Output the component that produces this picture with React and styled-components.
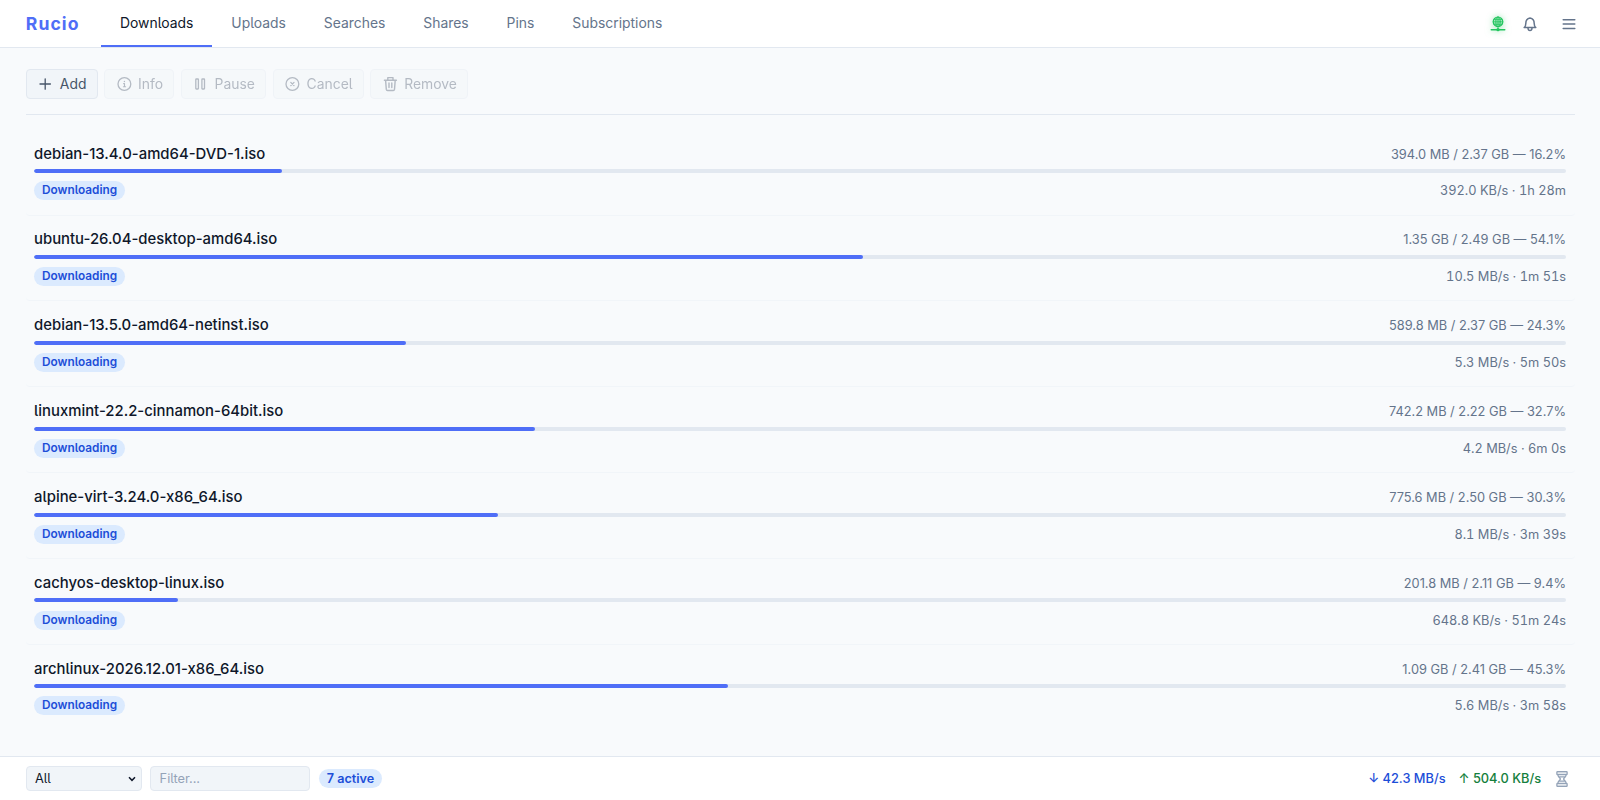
import React from "react";
import styled, { createGlobalStyle } from "styled-components";

const COLORS = {
  ACCENT: "#4f6ef7",
  TEXT: "#0f172a",
  MUTED: "#64748b",
  BORDER: "#e2e8f0",
  SURFACE: "#f1f5f9",
  BG: "#f8fafc",
  BADGE: "#dbeafe",
  BLUE: "#1d4ed8",
  GREEN: "#15803d",
};

const TABS = [
  "Downloads",
  "Uploads",
  "Searches",
  "Shares",
  "Pins",
  "Subscriptions",
];

const DOWNLOADS = [
  {
    name: "debian-13.4.0-amd64-DVD-1.iso",
    size: "394.0 MB / 2.37 GB",
    percent: 16.2,
    speed: "392.0 KB/s · 1h 28m",
  },
  {
    name: "ubuntu-26.04-desktop-amd64.iso",
    size: "1.35 GB / 2.49 GB",
    percent: 54.1,
    speed: "10.5 MB/s · 1m 51s",
  },
  {
    name: "debian-13.5.0-amd64-netinst.iso",
    size: "589.8 MB / 2.37 GB",
    percent: 24.3,
    speed: "5.3 MB/s · 5m 50s",
  },
  {
    name: "linuxmint-22.2-cinnamon-64bit.iso",
    size: "742.2 MB / 2.22 GB",
    percent: 32.7,
    speed: "4.2 MB/s · 6m 0s",
  },
  {
    name: "alpine-virt-3.24.0-x86_64.iso",
    size: "775.6 MB / 2.50 GB",
    percent: 30.3,
    speed: "8.1 MB/s · 3m 39s",
  },
  {
    name: "cachyos-desktop-linux.iso",
    size: "201.8 MB / 2.11 GB",
    percent: 9.4,
    speed: "648.8 KB/s · 51m 24s",
  },
  {
    name: "archlinux-2026.12.01-x86_64.iso",
    size: "1.09 GB / 2.41 GB",
    percent: 45.3,
    speed: "5.6 MB/s · 3m 58s",
  },
];

function Icon({ children, weight = 1.3 }) {
  return (
    <IconSvg $weight={weight} viewBox="0 0 16 16">
      {children}
    </IconSvg>
  );
}

const PlusIcon = () => (
  <Icon>
    <path d="M8.2 2.8v10.4M3 8h10.4" />
  </Icon>
);

const InfoIcon = () => (
  <Icon>
    <circle cx="8.4" cy="8" r="6.4" />
    <path d="M7.6 7.6h.9v3M7.4 10.8h2.2" strokeWidth="1.1" />
    <circle cx="8.4" cy="5.5" r="0.7" fill="currentColor" stroke="none" />
  </Icon>
);

const PauseIcon = () => (
  <Icon>
    <rect x="3.8" y="3" width="2.6" height="10" rx="0.5" />
    <rect x="9.9" y="3" width="2.6" height="10" rx="0.5" />
  </Icon>
);

const CancelIcon = () => (
  <Icon>
    <circle cx="8.4" cy="8" r="6.4" />
    <path d="M6.8 6.4l3.2 3.2M10 6.4L6.8 9.6" />
  </Icon>
);

const TrashIcon = () => (
  <Icon weight={1.4}>
    <path d="M2.4 4.2h12M5.8 4V1.6h5.2V4M3.6 4.4l.7 9c.1.7.5 1.1 1.2 1.1h5.8c.7 0 1.1-.4 1.2-1.1l.7-9M7 7v4.6M9.8 7v4.6" />
  </Icon>
);

const NetworkIcon = () => (
  <Icon weight={1.2}>
    <circle cx="8" cy="5.8" r="4.8" fill="currentColor" fillOpacity="0.25" />
    <ellipse cx="8" cy="5.8" rx="2.2" ry="4.8" strokeWidth="0.9" />
    <path d="M3.2 5.8h9.6M8 1v12M4 3.4h8M4 8.3h8" strokeWidth="0.8" />
    <path d="M1.2 13.7h13.6" strokeWidth="1.4" />
    <circle cx="8" cy="13.7" r="1.6" fill="currentColor" stroke="none" />
  </Icon>
);

const BellIcon = () => (
  <Icon weight={1.5}>
    <path d="M2.2 11.6h11.6c-1.1-1-1.6-2.2-1.6-4.2 0-3-1.5-5-4.2-5.4-2.7.4-4.2 2.4-4.2 5.4 0 2-.5 3.2-1.6 4.2zM6 12.2c.2 3 3.8 3 4 0" />
  </Icon>
);

const MenuIcon = () => (
  <Icon weight={1.5}>
    <path d="M2.2 3.7h11.6M2.2 8h11.6M2.2 12.4h11.6" />
  </Icon>
);

const HourglassIcon = () => (
  <Icon>
    <g fill="currentColor" fillOpacity="0.25">
      <rect x="2.9" y=".7" width="10.2" height="3" rx=".6" />
      <rect x="2.9" y="12.3" width="10.2" height="3" rx=".6" />
    </g>
    <path d="M3.9 3.8c0 2.4 2.5 3.1 2.5 4.2s-2.5 1.8-2.5 4.2M12.1 3.8c0 2.4-2.5 3.1-2.5 4.2s2.5 1.8 2.5 4.2M4.8 5.9h6.4M4.8 10.1h6.4" />
  </Icon>
);

const ACTIONS = [
  { label: "Add", icon: PlusIcon, enabled: true },
  { label: "Info", icon: InfoIcon },
  { label: "Pause", icon: PauseIcon },
  { label: "Cancel", icon: CancelIcon },
  { label: "Remove", icon: TrashIcon },
];

function Download({ item }) {
  return (
    <Row>
      <RowLine $align="baseline">
        <FileName>{item.name}</FileName>
        <Meta>
          {item.size} — {item.percent}%
        </Meta>
      </RowLine>
      <Track>
        <Fill style={{ width: `${item.percent}%` }} />
      </Track>
      <RowLine>
        <Badge>Downloading</Badge>
        <Meta $tabular>{item.speed}</Meta>
      </RowLine>
    </Row>
  );
}

function App() {
  return (
    <Page>
      <GlobalStyle />
      <Header>
        <Brand>Rucio</Brand>
        <Nav>
          {TABS.map((tab, index) => (
            <Tab key={tab} $active={index === 0}>
              {tab}
            </Tab>
          ))}
        </Nav>
        <HeaderIcons>
          <StatusIcon>
            <NetworkIcon />
          </StatusIcon>
          <BellIcon />
          <MenuButton>
            <MenuIcon />
          </MenuButton>
        </HeaderIcons>
      </Header>
      <Main>
        <Toolbar>
          {ACTIONS.map(({ label, icon: ActionIcon, enabled }) => (
            <ActionButton key={label} disabled={!enabled}>
              <ActionIcon />
              {label}
            </ActionButton>
          ))}
        </Toolbar>
        <List>
          {DOWNLOADS.map((item) => (
            <Download key={item.name} item={item} />
          ))}
        </List>
      </Main>
      <Footer>
        <SelectWrap>
          <Select defaultValue="All">
            <option>All</option>
          </Select>
          <Chevron viewBox="0 0 8 6">
            <path d="M1 1.2l3 3.1 3-3.1" />
          </Chevron>
        </SelectWrap>
        <FilterInput placeholder="Filter..." />
        <ActiveBadge>7 active</ActiveBadge>
        <Speeds>
          <Speed $color={COLORS.BLUE}>↓ 42.3 MB/s</Speed>
          <Speed $color={COLORS.GREEN}>↑ 504.0 KB/s</Speed>
          <LimitIcon>
            <HourglassIcon />
          </LimitIcon>
        </Speeds>
      </Footer>
    </Page>
  );
}

const GlobalStyle = createGlobalStyle`
  * {
    box-sizing: border-box;
  }
  body {
    margin: 0;
    background: ${COLORS.BG};
    color: ${COLORS.TEXT};
    font-family: Inter, "Liberation Sans", sans-serif;
    font-size: 16px;
    font-feature-settings: "cv05";
  }
  button, input, select {
    font-feature-settings: inherit;
  }
`;

const IconSvg = styled.svg`
  display: block;
  flex: none;
  width: 16px;
  height: 16px;
  fill: none;
  stroke: currentColor;
  stroke-width: ${({ $weight }) => $weight};
  stroke-linecap: round;
  stroke-linejoin: round;
`;

const Page = styled.div`
  display: flex;
  flex-direction: column;
  height: 100vh;
`;

const Header = styled.header`
  display: flex;
  align-items: stretch;
  height: 48px;
  padding: 0 23.2px 0 25.8px;
  background: #fff;
  border-bottom: 1px solid ${COLORS.BORDER};
`;

const Brand = styled.div`
  align-self: center;
  margin-right: 21.5px;
  color: ${COLORS.ACCENT};
  font-size: 17.6px;
  font-weight: 700;
  letter-spacing: 1.06px;
`;

const Nav = styled.nav`
  display: flex;
`;

const Tab = styled.a`
  display: flex;
  align-items: center;
  padding: 1px 18.95px 0;
  border-bottom: 2px solid
    ${({ $active }) => ($active ? COLORS.ACCENT : "transparent")};
  color: ${({ $active }) => ($active ? COLORS.TEXT : COLORS.MUTED)};
  font-size: 13.92px;
`;

const HeaderIcons = styled.div`
  display: flex;
  align-items: center;
  gap: 16px;
  margin-left: auto;
  color: ${COLORS.MUTED};
`;

const StatusIcon = styled.span`
  color: #22c55e;
  filter: drop-shadow(0 0 3px rgba(34, 197, 94, 0.5));
`;

const MenuButton = styled.span`
  margin-left: 7px;
`;

const Main = styled.main`
  flex: 1;
  min-height: 0;
  padding: 20.8px 25px 0 26px;
`;

const Toolbar = styled.div`
  display: flex;
  gap: 6.4px;
  padding-bottom: 15px;
  border-bottom: 1px solid ${COLORS.BORDER};
`;

const ActionButton = styled.button`
  display: flex;
  align-items: center;
  gap: 6.4px;
  height: 30.4px;
  padding: 0 10.4px;
  border: 1px solid ${COLORS.BORDER};
  border-radius: 4px;
  background: ${COLORS.SURFACE};
  color: #475569;
  font-family: inherit;
  font-size: 13.92px;
  opacity: ${({ disabled }) => (disabled ? 0.38 : 1)};
`;

const List = styled.div`
  padding-top: 14.5px;
`;

const Row = styled.div`
  height: 85.87px;
  padding: 13.9px 9px 0 8px;
  border-bottom: 1px solid ${COLORS.SURFACE};
  border-radius: 4px;

  &:last-child {
    border-bottom-color: transparent;
  }
`;

const RowLine = styled.div`
  display: flex;
  align-items: ${({ $align = "center" }) => $align};
  justify-content: space-between;
`;

const FileName = styled.span`
  font-size: 14.88px;
  font-weight: 500;
  line-height: 20px;
`;

const Meta = styled.span`
  color: ${COLORS.MUTED};
  font-size: 12.8px;
  font-variant-numeric: ${({ $tabular }) =>
    $tabular ? "tabular-nums" : "normal"};
`;

const Track = styled.div`
  height: 4px;
  margin: 5.55px 0 8.2px;
  border-radius: 2px;
  background: ${COLORS.BORDER};
  overflow: hidden;
`;

const Fill = styled.div`
  height: 100%;
  border-radius: 2px;
  background: ${COLORS.ACCENT};
`;

const Badge = styled.span`
  padding: 2px 8px;
  border-radius: 10px;
  background: ${COLORS.BADGE};
  color: ${COLORS.BLUE};
  font-size: 11.8px;
  font-weight: 600;
  line-height: 15px;
`;

const Footer = styled.footer`
  display: flex;
  align-items: center;
  height: 44px;
  padding: 0 29.9px 0 26px;
  background: #fff;
  border-top: 1px solid ${COLORS.BORDER};
`;

const SelectWrap = styled.div`
  position: relative;
`;

const Select = styled.select`
  display: block;
  width: 116px;
  height: 25px;
  padding: 0 8px;
  border: 1px solid ${COLORS.BORDER};
  border-radius: 4px;
  background: ${COLORS.SURFACE};
  color: ${COLORS.TEXT};
  font-family: inherit;
  font-size: 12.8px;
  appearance: none;
`;

const Chevron = styled.svg`
  position: absolute;
  top: 10px;
  right: 6px;
  width: 8px;
  height: 6px;
  fill: none;
  stroke: ${COLORS.TEXT};
  stroke-width: 1.5;
`;

const FilterInput = styled.input`
  width: 160px;
  height: 25px;
  margin: 0 9px 0 8px;
  padding: 0 8.6px;
  border: 1px solid ${COLORS.BORDER};
  border-radius: 4px;
  background: ${COLORS.SURFACE};
  font-family: inherit;
  font-size: 12.8px;

  &::placeholder {
    color: #94a3b8;
  }
`;

const ActiveBadge = styled(Badge)`
  padding: 2px 7.7px;
  font-size: 12.64px;
`;

const Speeds = styled.div`
  display: flex;
  align-items: center;
  gap: 13px;
  margin-left: auto;
`;

const Speed = styled.span`
  color: ${({ $color }) => $color};
  font-size: 12.8px;
  font-weight: 500;
`;

const LimitIcon = styled.span`
  color: #94a3b8;
`;

export default App;
